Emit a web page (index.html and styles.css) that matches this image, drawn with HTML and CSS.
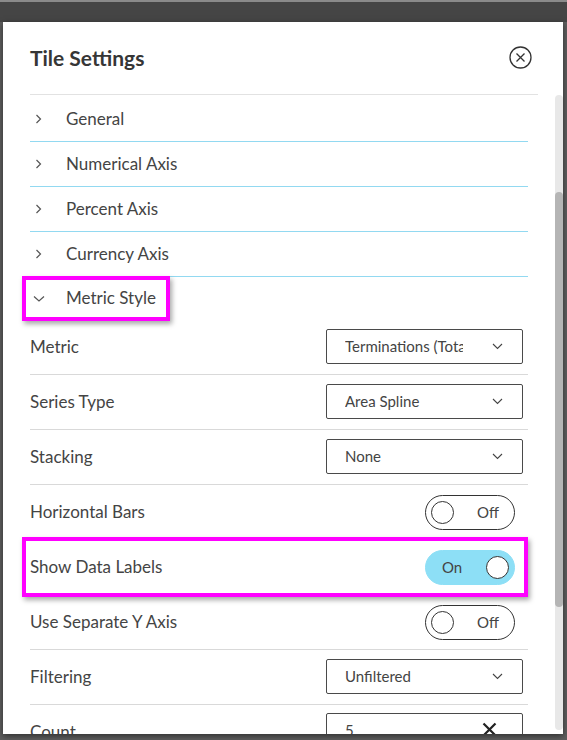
FILE: index.html
```html
<!DOCTYPE html>
<html lang="en">
<head>
<meta charset="utf-8">
<title>Tile Settings</title>
<link rel="stylesheet" href="styles.css">
</head>
<body>
<div class="topbar"></div>
<div class="dialog">
  <header class="dlg-head">
    <h1 class="dlg-title">Tile Settings</h1>
    <span class="close-btn">
      <svg width="23" height="23" viewBox="0 0 23 23"><circle cx="11.5" cy="11.5" r="10.5" fill="none" stroke="#333" stroke-width="1.3"/><path d="M7.5 7.5 L15.5 15.5 M15.5 7.5 L7.5 15.5" stroke="#333" stroke-width="1.3" fill="none"/></svg>
    </span>
  </header>
  <div class="dlg-body">
    <div class="content">
      <div class="acc-row"><svg class="chev-r" width="8" height="10" viewBox="0 0 8 10"><path d="M1.5 1 L5.5 5 L1.5 9" fill="none" stroke="#555" stroke-width="1.2"/></svg><span class="acc-label">General</span></div>
      <div class="acc-row"><svg class="chev-r" width="8" height="10" viewBox="0 0 8 10"><path d="M1.5 1 L5.5 5 L1.5 9" fill="none" stroke="#555" stroke-width="1.2"/></svg><span class="acc-label">Numerical Axis</span></div>
      <div class="acc-row"><svg class="chev-r" width="8" height="10" viewBox="0 0 8 10"><path d="M1.5 1 L5.5 5 L1.5 9" fill="none" stroke="#555" stroke-width="1.2"/></svg><span class="acc-label">Percent Axis</span></div>
      <div class="acc-row"><svg class="chev-r" width="8" height="10" viewBox="0 0 8 10"><path d="M1.5 1 L5.5 5 L1.5 9" fill="none" stroke="#555" stroke-width="1.2"/></svg><span class="acc-label">Currency Axis</span></div>
      <div class="acc-row open"><span class="hl hl-title"></span><svg class="chev-d" width="12" height="8" viewBox="0 0 12 8"><path d="M1 1.5 L6 6 L11 1.5" fill="none" stroke="#555" stroke-width="1.2"/></svg><span class="acc-label">Metric Style</span></div>

      <div class="set-row"><span class="lbl">Metric</span><div class="select"><span class="sel-val clip">Terminations (Total)</span><svg class="sel-chev" width="11" height="7" viewBox="0 0 11 7"><path d="M1 1 L5.5 5.5 L10 1" fill="none" stroke="#444" stroke-width="1.1"/></svg></div></div>
      <div class="set-row"><span class="lbl">Series Type</span><div class="select"><span class="sel-val">Area Spline</span><svg class="sel-chev" width="11" height="7" viewBox="0 0 11 7"><path d="M1 1 L5.5 5.5 L10 1" fill="none" stroke="#444" stroke-width="1.1"/></svg></div></div>
      <div class="set-row"><span class="lbl">Stacking</span><div class="select"><span class="sel-val">None</span><svg class="sel-chev" width="11" height="7" viewBox="0 0 11 7"><path d="M1 1 L5.5 5.5 L10 1" fill="none" stroke="#444" stroke-width="1.1"/></svg></div></div>
      <div class="set-row"><span class="lbl">Horizontal Bars</span><div class="toggle"><span class="knob"></span><span class="tg-text">Off</span></div></div>
      <div class="set-row"><span class="hl hl-row"></span><span class="lbl">Show Data Labels</span><div class="toggle on"><span class="tg-text">On</span><span class="knob"></span></div></div>
      <div class="set-row"><span class="lbl">Use Separate Y Axis</span><div class="toggle"><span class="knob"></span><span class="tg-text">Off</span></div></div>
      <div class="set-row"><span class="lbl">Filtering</span><div class="select"><span class="sel-val">Unfiltered</span><svg class="sel-chev" width="11" height="7" viewBox="0 0 11 7"><path d="M1 1 L5.5 5.5 L10 1" fill="none" stroke="#444" stroke-width="1.1"/></svg></div></div>
      <div class="set-row count-row"><span class="lbl">Count</span><div class="select input"><span class="sel-val">5</span><svg class="clear-x" width="15" height="15" viewBox="0 0 15 15"><path d="M1.5 1.5 L13.5 13.5 M13.5 1.5 L1.5 13.5" fill="none" stroke="#222" stroke-width="2.2"/></svg></div></div>
    </div>
    <div class="scrollbar"><div class="thumb"></div></div>
  </div>
</div>
</body>
</html>
```
FILE: styles.css
```css
* { box-sizing: border-box; }
html, body { margin: 0; padding: 0; }
body {
  width: 567px;
  height: 740px;
  overflow: hidden;
  background: #5e5e5e;
  font-family: "Lato", "Liberation Sans", sans-serif;
  color: #444;
}
.topbar {
  height: 22px;
  background: #454545;
  border-top: 2px solid #8a8a8a;
}
.dialog {
  margin-left: 3px;
  width: 560px;
  height: 712px;
  background: #fff;
  display: flex;
  flex-direction: column;
  overflow: hidden;
  box-shadow: 0 2px 6px rgba(0,0,0,0.5);
}
.dlg-head {
  height: 73px;
  flex: none;
  margin: 0 25px 0 27px;
  border-bottom: 1px solid #e2e2e2;
  display: flex;
  align-items: center;
  justify-content: space-between;
}
.dlg-title {
  margin: 0 0 2px 0;
  font-size: 21px;
  font-weight: 700;
  color: #363636;
}
.close-btn {
  display: flex;
  margin-right: 6px;
  margin-top: -2px;
}
.dlg-body {
  flex: 1;
  display: flex;
  min-height: 0;
}
.content {
  flex: 1;
  padding: 2px 27px 0 27px;
  overflow: hidden;
}
.scrollbar {
  width: 8px;
  flex: none;
  margin-bottom: 4px;
  background: #e8e8e8;
  border-radius: 4px;
  padding-top: 97px;
}
.thumb {
  height: 415px;
  background: #b5b5b5;
  border-radius: 4px;
}
.acc-row {
  position: relative;
  height: 45px;
  border-bottom: 1px solid #92d9f1;
  display: flex;
  align-items: center;
  font-size: 17px;
  color: #444;
}
.acc-row.open {
  height: 43px;
  border-bottom: none;
}
.acc-label { margin-bottom: 2px; }
.chev-r {
  margin-left: 5px;
  margin-right: 23px;
}
.chev-d {
  margin-left: 3px;
  margin-right: 21px;
}
.set-row {
  position: relative;
  height: 55px;
  border-bottom: 1px solid #d9d9d9;
  display: flex;
  align-items: center;
  justify-content: space-between;
  font-size: 17px;
}
.count-row {
  align-items: flex-start;
  padding-top: 8px;
  border-bottom: none;
}
.count-row .lbl { margin-top: 8px; }
.lbl { color: #444; margin-bottom: 2px; }
.select {
  width: 197px;
  height: 35px;
  margin-right: 5px;
  margin-bottom: 1px;
  border: 1px solid #4a4a4a;
  border-radius: 2px;
  display: flex;
  align-items: center;
  padding: 0 19px 0 18px;
  font-size: 15px;
  color: #444;
}
.sel-val {
  width: 122px;
  white-space: nowrap;
  overflow: hidden;
  margin-bottom: 1px;
}
.sel-val.clip { width: 118px; margin-right: 4px; }
.sel-chev { margin-left: auto; }
.clear-x { margin-left: auto; margin-right: 6px; margin-top: 1px; }
.input { align-items: flex-start; padding-top: 7px; }
.toggle {
  width: 90px;
  height: 35px;
  margin-right: 13px;
  border: 1px solid #333;
  border-radius: 18px;
  display: flex;
  align-items: center;
  padding: 0 5px;
  font-size: 15px;
  color: #444;
}
.toggle .tg-text { margin-left: 23px; }
.knob {
  width: 23px;
  height: 23px;
  border-radius: 50%;
  border: 1.2px solid #333;
  background: #fff;
  flex: none;
}
.toggle.on {
  background: #8ddff6;
  border-color: #8ddff6;
  justify-content: space-between;
  padding: 0 5px 0 16px;
}
.toggle.on .tg-text { margin-left: 0; }
.hl {
  position: absolute;
  border: 4px solid #ff00ff;
  box-shadow: 2px 3px 5px rgba(0,0,0,0.35);
  pointer-events: none;
}
.hl-title {
  left: -8px;
  top: -1px;
  width: 148px;
  height: 45px;
}
.hl-row {
  left: -8px;
  top: -3px;
  right: 0;
  height: 60px;
}
```
